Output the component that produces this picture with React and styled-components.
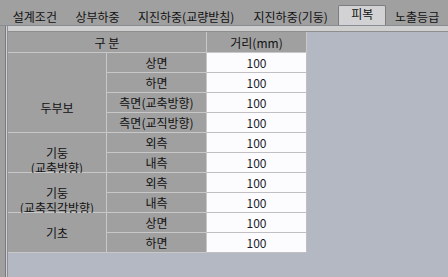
import React from "react";
import styled, { createGlobalStyle } from "styled-components";

const Global = createGlobalStyle`
  html, body { margin: 0; padding: 0; background: #a0a0a0; }
  * { box-sizing: border-box; }
`;

const Root = styled.div`
  width: 448px;
  height: 277px;
  background: #a0a0a0;
  display: flex;
  flex-direction: column;
  overflow: hidden;
  font-family: "Noto Sans CJK KR", "Noto Sans", sans-serif;
  font-size: 12px;
  color: #111;
`;

const TabBar = styled.div`
  height: 26px;
  display: flex;
  align-items: flex-end;
  padding-left: 4px;
  border-bottom: 1px solid #8a8c94;
  flex-shrink: 0;
`;

const Tab = styled.div`
  width: ${(p) => p.$w}px;
  height: ${(p) => (p.$active ? 20 : 18)}px;
  display: flex;
  justify-content: center;
  align-items: flex-start;
  line-height: 14px;
  padding-top: ${(p) => (p.$active ? 1 : 2)}px;
  white-space: nowrap;
  background: ${(p) => (p.$active ? "#d2d2d4" : "transparent")};
  border: ${(p) => (p.$active ? "1px solid #7c7c80" : "1px solid transparent")};
  border-bottom: none;
  border-radius: 2px 2px 0 0;
`;

const Panel = styled.div`
  flex: 1;
  display: flex;
  margin-left: 5px;
  border-left: 1px solid #7a7a7a;
`;

const PanelEdge = styled.div`
  width: 2px;
  background: #cfcfd4;
  border-right: 1px solid #8e8e94;
  flex-shrink: 0;
`;

const Body = styled.div`
  flex: 1;
  display: flex;
  flex-direction: column;
  background: #b4b8c2;
`;

const TopStrip = styled.div`
  height: 6px;
  background: #cfcfcf;
  border-bottom: 1px solid #8e8e8e;
`;

const Grid = styled.div`
  display: grid;
  grid-template-columns: 99px 100px 100px;
  grid-template-rows: 21px repeat(10, 20px);
  width: 299px;
  background: #a0a0a0;
`;

const Cell = styled.div`
  display: flex;
  flex-direction: column;
  align-items: center;
  justify-content: center;
  text-align: center;
  line-height: 15px;
  white-space: nowrap;
  padding-top: ${(p) => p.$pad || 0}px;
  border-right: 1px solid #c8c8c8;
  border-bottom: 1px solid #c8c8c8;
  background: #a0a0a0;
  grid-column: ${(p) => p.$col || "auto"};
  grid-row: ${(p) => p.$row || "auto"};
`;

const ValueCell = styled(Cell)`
  background: #fcfcff;
  border-right-color: #c0c0c4;
  border-bottom-color: #c0c0c4;
  color: #1a1a28;
`;

const groups = [
  { label: ["두부보"], pad: 30, items: ["상면", "하면", "측면(교축방향)", "측면(교직방향)"] },
  { label: ["기둥", "(교축방향)"], pad: 15, items: ["외측", "내측"] },
  { label: ["기둥", "(교축직각방향)"], pad: 15, items: ["외측", "내측"] },
  { label: ["기초"], pad: 0, items: ["상면", "하면"] },
];

const tabs = [
  { t: "설계조건", w: 62 },
  { t: "상부하중", w: 64 },
  { t: "지진하중(교량받침)", w: 114 },
  { t: "지진하중(기둥)", w: 96 },
  { t: "피복", w: 48, active: true },
  { t: "노출등급", w: 62 },
];

export default function App() {
  let row = 2;
  const cells = [];
  groups.forEach((g, gi) => {
    const start = row;
    cells.push(
      <Cell key={`g${gi}`} $col="1" $row={`${start} / span ${g.items.length}`} $pad={g.pad}>
        {g.label.map((l, i) => (
          <span key={i}>{l}</span>
        ))}
      </Cell>
    );
    g.items.forEach((it, ii) => {
      cells.push(
        <Cell key={`s${gi}-${ii}`} $col="2" $row={`${row}`}>
          {it}
        </Cell>
      );
      cells.push(
        <ValueCell key={`v${gi}-${ii}`} $col="3" $row={`${row}`}>
          100
        </ValueCell>
      );
      row += 1;
    });
  });

  return (
    <Root>
      <Global />
      <TabBar>
        {tabs.map((t) => (
          <Tab key={t.t} $w={t.w} $active={t.active}>
            {t.t}
          </Tab>
        ))}
      </TabBar>
      <Panel>
        <PanelEdge />
        <Body>
          <TopStrip />
          <Grid>
            <Cell $col="1 / span 2" $row="1">구 분</Cell>
            <Cell $col="3" $row="1">거리(mm)</Cell>
            {cells}
          </Grid>
        </Body>
      </Panel>
    </Root>
  );
}
